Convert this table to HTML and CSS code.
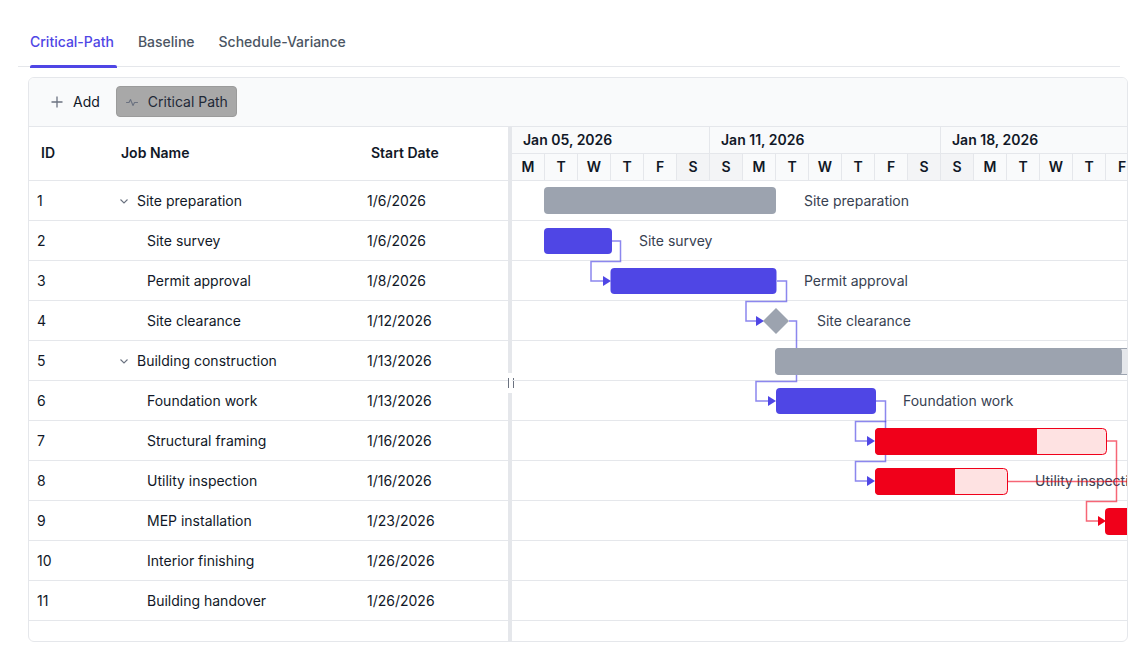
FILE: index.html
```html
<!DOCTYPE html>
<html lang="en">
<head>
<meta charset="utf-8">
<title>Gantt - Critical Path</title>
<link rel="stylesheet" href="styles.css">
</head>
<body>
<div class="tabs">
  <div class="tab active">Critical-Path</div>
  <div class="tab">Baseline</div>
  <div class="tab">Schedule-Variance</div>
</div>

<div class="gantt">
  <div class="toolbar">
    <button class="tb-btn">
      <svg class="tb-icon" viewBox="0 0 12 12" width="12" height="12"><path d="M6 0.5V11.5M0.5 6H11.5" stroke="#6b7280" stroke-width="1.3" fill="none"/></svg>
      <span>Add</span>
    </button>
    <button class="tb-btn pressed">
      <svg class="tb-icon" viewBox="0 0 12 12" width="12" height="12"><path d="M0.5 6.5H3L4.5 3.5L7 9.5L8.5 6.5H11.5" stroke="#6b7280" stroke-width="1.1" fill="none" stroke-linejoin="round" stroke-linecap="round"/></svg>
      <span>Critical Path</span>
    </button>
  </div>

  <div class="panes">
    <div class="grid">
      <div class="grid-head">
        <div class="hc hc-id">ID</div>
        <div class="hc hc-name">Job Name</div>
        <div class="hc hc-date">Start Date</div>
      </div>
      <div class="grid-body">
        <div class="grow"><div class="gc gc-id">1</div><div class="gc gc-name parent"><svg class="chev" viewBox="0 0 10 10" width="10" height="10"><path d="M1.5 3.5L5 7L8.5 3.5" stroke="#6b7280" stroke-width="1.1" fill="none"/></svg>Site preparation</div><div class="gc gc-date">1/6/2026</div></div>
        <div class="grow"><div class="gc gc-id">2</div><div class="gc gc-name child">Site survey</div><div class="gc gc-date">1/6/2026</div></div>
        <div class="grow"><div class="gc gc-id">3</div><div class="gc gc-name child">Permit approval</div><div class="gc gc-date">1/8/2026</div></div>
        <div class="grow"><div class="gc gc-id">4</div><div class="gc gc-name child">Site clearance</div><div class="gc gc-date">1/12/2026</div></div>
        <div class="grow"><div class="gc gc-id">5</div><div class="gc gc-name parent"><svg class="chev" viewBox="0 0 10 10" width="10" height="10"><path d="M1.5 3.5L5 7L8.5 3.5" stroke="#6b7280" stroke-width="1.1" fill="none"/></svg>Building construction</div><div class="gc gc-date">1/13/2026</div></div>
        <div class="grow"><div class="gc gc-id">6</div><div class="gc gc-name child">Foundation work</div><div class="gc gc-date">1/13/2026</div></div>
        <div class="grow"><div class="gc gc-id">7</div><div class="gc gc-name child">Structural framing</div><div class="gc gc-date">1/16/2026</div></div>
        <div class="grow"><div class="gc gc-id">8</div><div class="gc gc-name child">Utility inspection</div><div class="gc gc-date">1/16/2026</div></div>
        <div class="grow"><div class="gc gc-id">9</div><div class="gc gc-name child">MEP installation</div><div class="gc gc-date">1/23/2026</div></div>
        <div class="grow"><div class="gc gc-id">10</div><div class="gc gc-name child">Interior finishing</div><div class="gc gc-date">1/26/2026</div></div>
        <div class="grow"><div class="gc gc-id">11</div><div class="gc gc-name child">Building handover</div><div class="gc gc-date">1/26/2026</div></div>
      </div>
    </div>

    <div class="splitter"><span class="handle"></span></div>

    <div class="chart">
      <div class="tl-head">
        <div class="weeks">
          <div class="week w6">Jan 05, 2026</div>
          <div class="week w7">Jan 11, 2026</div>
          <div class="week w7">Jan 18, 2026</div>
        </div>
        <div class="days">
          <div class="day">M</div><div class="day">T</div><div class="day">W</div><div class="day">T</div><div class="day">F</div><div class="day we">S</div>
          <div class="day we">S</div><div class="day">M</div><div class="day">T</div><div class="day">W</div><div class="day">T</div><div class="day">F</div><div class="day we">S</div>
          <div class="day we">S</div><div class="day">M</div><div class="day">T</div><div class="day">W</div><div class="day">T</div><div class="day">F</div>
        </div>
      </div>
      <div class="chart-body">
        <div class="crow"></div><div class="crow"></div><div class="crow"></div><div class="crow"></div>
        <div class="crow"></div><div class="crow"></div><div class="crow"></div><div class="crow"></div>
        <div class="crow"></div><div class="crow"></div><div class="crow"></div>

        <svg class="canvas" width="760" height="440" viewBox="0 0 760 440">
          <!-- labels -->
          <g class="labels">
            <text x="292" y="19">Site preparation</text>
            <text x="127" y="59">Site survey</text>
            <text x="292" y="99">Permit approval</text>
            <text x="305" y="139">Site clearance</text>
            <text x="391" y="219">Foundation work</text>
            <text x="523" y="299">Utility inspection</text>
          </g>
          <!-- connectors -->
          <g class="conn-blue" fill="none">
            <path d="M100 60H108.5V80.5H79V100H92"/>
            <path d="M265 100H274.5V120.5H234V140H245"/>
            <path d="M277 140H284.5V200.5H244V220H257"/>
            <path d="M364 220H373.5V240.5H343.5V260H356"/>
            <path d="M373.5 240V280.5H343.5V300H356"/>
          </g>
          <g fill="#4f46e5">
            <polygon points="91,95 99,100 91,105"/>
            <polygon points="244,135 252,140 244,145"/>
            <polygon points="256,215 264,220 256,225"/>
            <polygon points="355,255 363,260 355,265"/>
            <polygon points="355,295 363,300 355,305"/>
          </g>
          <g class="conn-red" fill="none">
            <path d="M595 260H604.5V320.5H574.5V340H587"/>
            <path d="M496 300.5H760"/>
          </g>
          <g fill="#f0001a">
            <polygon points="586,335 594,340 586,345"/>
          </g>
          <!-- bars -->
          <rect x="32" y="6" width="232" height="27" rx="4" fill="#9ca3af"/>
          <rect x="32" y="47" width="68" height="26" rx="4" fill="#4f46e5"/>
          <rect x="98.5" y="87" width="166" height="26" rx="4" fill="#4f46e5"/>
          <polygon points="264,127 277,140 264,153 251,140" fill="#9ca3af"/>
          <rect x="263.5" y="167.5" width="500" height="26" rx="4" fill="#e5e7eb" stroke="#9ca3af"/>
          <rect x="263" y="167" width="347" height="27" rx="4" fill="#9ca3af"/>
          <rect x="264" y="207" width="100" height="26" rx="4" fill="#4f46e5"/>
          <rect x="363.5" y="247.5" width="231" height="26" rx="4" fill="#fee2e2" stroke="#f0001a"/>
          <rect x="363" y="247" width="162" height="27" rx="4" fill="#f0001a"/>
          <rect x="520" y="247" width="5" height="27" fill="#f0001a"/>
          <rect x="363.5" y="287.5" width="132" height="26" rx="4" fill="#fee2e2" stroke="#f0001a"/>
          <rect x="363" y="287" width="80" height="27" rx="4" fill="#f0001a"/>
          <rect x="438" y="287" width="5" height="27" fill="#f0001a"/>
          <rect x="593" y="327" width="120" height="27" rx="4" fill="#f0001a"/>
        </svg>
      </div>
    </div>
  </div>
</div>
</body>
</html>
```

FILE: styles.css
```css
* { box-sizing: border-box; }

body {
  margin: 0;
  background: #ffffff;
  font-family: Inter, "Noto Sans", "Liberation Sans", sans-serif;
  font-size: 14px;
  color: #111827;
}

/* Tabs */
.tabs {
  display: flex;
  align-items: flex-end;
  gap: 24px;
  height: 67px;
  margin: 0 18px;
  padding-left: 12px;
  border-bottom: 1px solid #e5e7eb;
}

.tab {
  position: relative;
  height: 48px;
  padding-bottom: 2px;
  display: flex;
  align-items: center;
  font-size: 14px;
  font-weight: 500;
  color: #4b5563;
}

.tab.active { color: #4f46e5; }

.tab.active::after {
  content: "";
  position: absolute;
  left: 0;
  right: -3px;
  bottom: -2px;
  height: 3px;
  background: #4f46e5;
  border-radius: 2px 2px 0 0;
}

/* Gantt container */
.gantt {
  margin: 10px 10px 0 28px;
  height: 565px;
  border: 1px solid #e5e7eb;
  border-radius: 6px;
  overflow: hidden;
  display: flex;
  flex-direction: column;
}

.toolbar {
  height: 49px;
  flex-shrink: 0;
  display: flex;
  align-items: center;
  gap: 7px;
  padding-left: 13px;
  padding-bottom: 1px;
  background: #f9fafb;
  border-bottom: 1px solid #e5e7eb;
}

.tb-btn {
  height: 31px;
  display: flex;
  align-items: center;
  gap: 10px;
  padding: 0 8px;
  border: 1px solid transparent;
  border-radius: 4px;
  background: transparent;
  font-family: inherit;
  font-size: 14px;
  color: #111827;
}

.tb-btn.pressed {
  padding: 0 8px 0 9px;
  background: #a8a8a8;
  border-color: #9b9b9b;
  color: #1f2937;
}

.tb-icon { flex-shrink: 0; }

/* Panes */
.panes {
  flex: 1;
  display: flex;
  min-height: 0;
}

.grid {
  width: 479px;
  flex-shrink: 0;
  display: flex;
  flex-direction: column;
}

.grid-head {
  height: 54px;
  display: flex;
  align-items: center;
  padding-bottom: 2px;
  border-bottom: 1px solid #e5e7eb;
  font-weight: 600;
  color: #111827;
}

.hc-id { width: 79px; padding-left: 12px; }
.hc-name { width: 250px; padding-left: 13px; }
.hc-date { width: 150px; padding-left: 13px; }

.grow {
  height: 40px;
  display: flex;
  align-items: center;
  padding-bottom: 1px;
  border-bottom: 1px solid #e5e7eb;
}

.gc-id { width: 79px; padding-left: 8px; }
.gc-name { width: 250px; display: flex; align-items: center; }
.gc-name.parent { padding-left: 11px; }
.gc-name.child { padding-left: 39px; }
.gc-date { width: 150px; padding-left: 9px; }

.chev { margin-right: 8px; flex-shrink: 0; position: relative; top: 1px; }

/* Splitter */
.splitter {
  position: relative;
  width: 4px;
  flex-shrink: 0;
  background: #e5e7eb;
}

.handle {
  position: absolute;
  left: 0;
  top: 246px;
  width: 4px;
  height: 20px;
  background: #ffffff;
  padding-top: 5px;
}

.handle::before {
  content: "";
  display: block;
  width: 4px;
  height: 10px;
  border-left: 1px solid #6b7280;
  border-right: 1px solid #6b7280;
}

/* Chart */
.chart {
  flex: 1;
  min-width: 0;
  overflow: hidden;
  display: flex;
  flex-direction: column;
}

.tl-head {
  flex-shrink: 0;
  background: #f9fafb;
  font-weight: 600;
  color: #111827;
}

.weeks, .days {
  display: flex;
  height: 27px;
  border-bottom: 1px solid #e5e7eb;
}

.week {
  flex-shrink: 0;
  height: 26px;
  line-height: 25px;
  padding-left: 11px;
  border-right: 1px solid #e5e7eb;
  white-space: nowrap;
}

.w6 { width: 198px; }
.w7 { width: 231px; }

.day {
  flex-shrink: 0;
  width: 33px;
  height: 26px;
  line-height: 26px;
  text-align: center;
  border-right: 1px solid #e5e7eb;
}

.day.we { background: #f3f4f6; }

.chart-body {
  position: relative;
  flex: 1;
}

.crow {
  height: 40px;
  border-bottom: 1px solid #e5e7eb;
}

.canvas {
  position: absolute;
  left: 0;
  top: 0;
  overflow: visible;
}

.labels text {
  font-family: Inter, "Noto Sans", "Liberation Sans", sans-serif;
  font-size: 14px;
  fill: #374151;
  dominant-baseline: central;
}

.conn-blue path {
  stroke: #4f46e5;
  stroke-opacity: 0.65;
  stroke-width: 1.5;
}

.conn-red path {
  stroke: #f0001a;
  stroke-opacity: 0.6;
  stroke-width: 1.5;
}
```
